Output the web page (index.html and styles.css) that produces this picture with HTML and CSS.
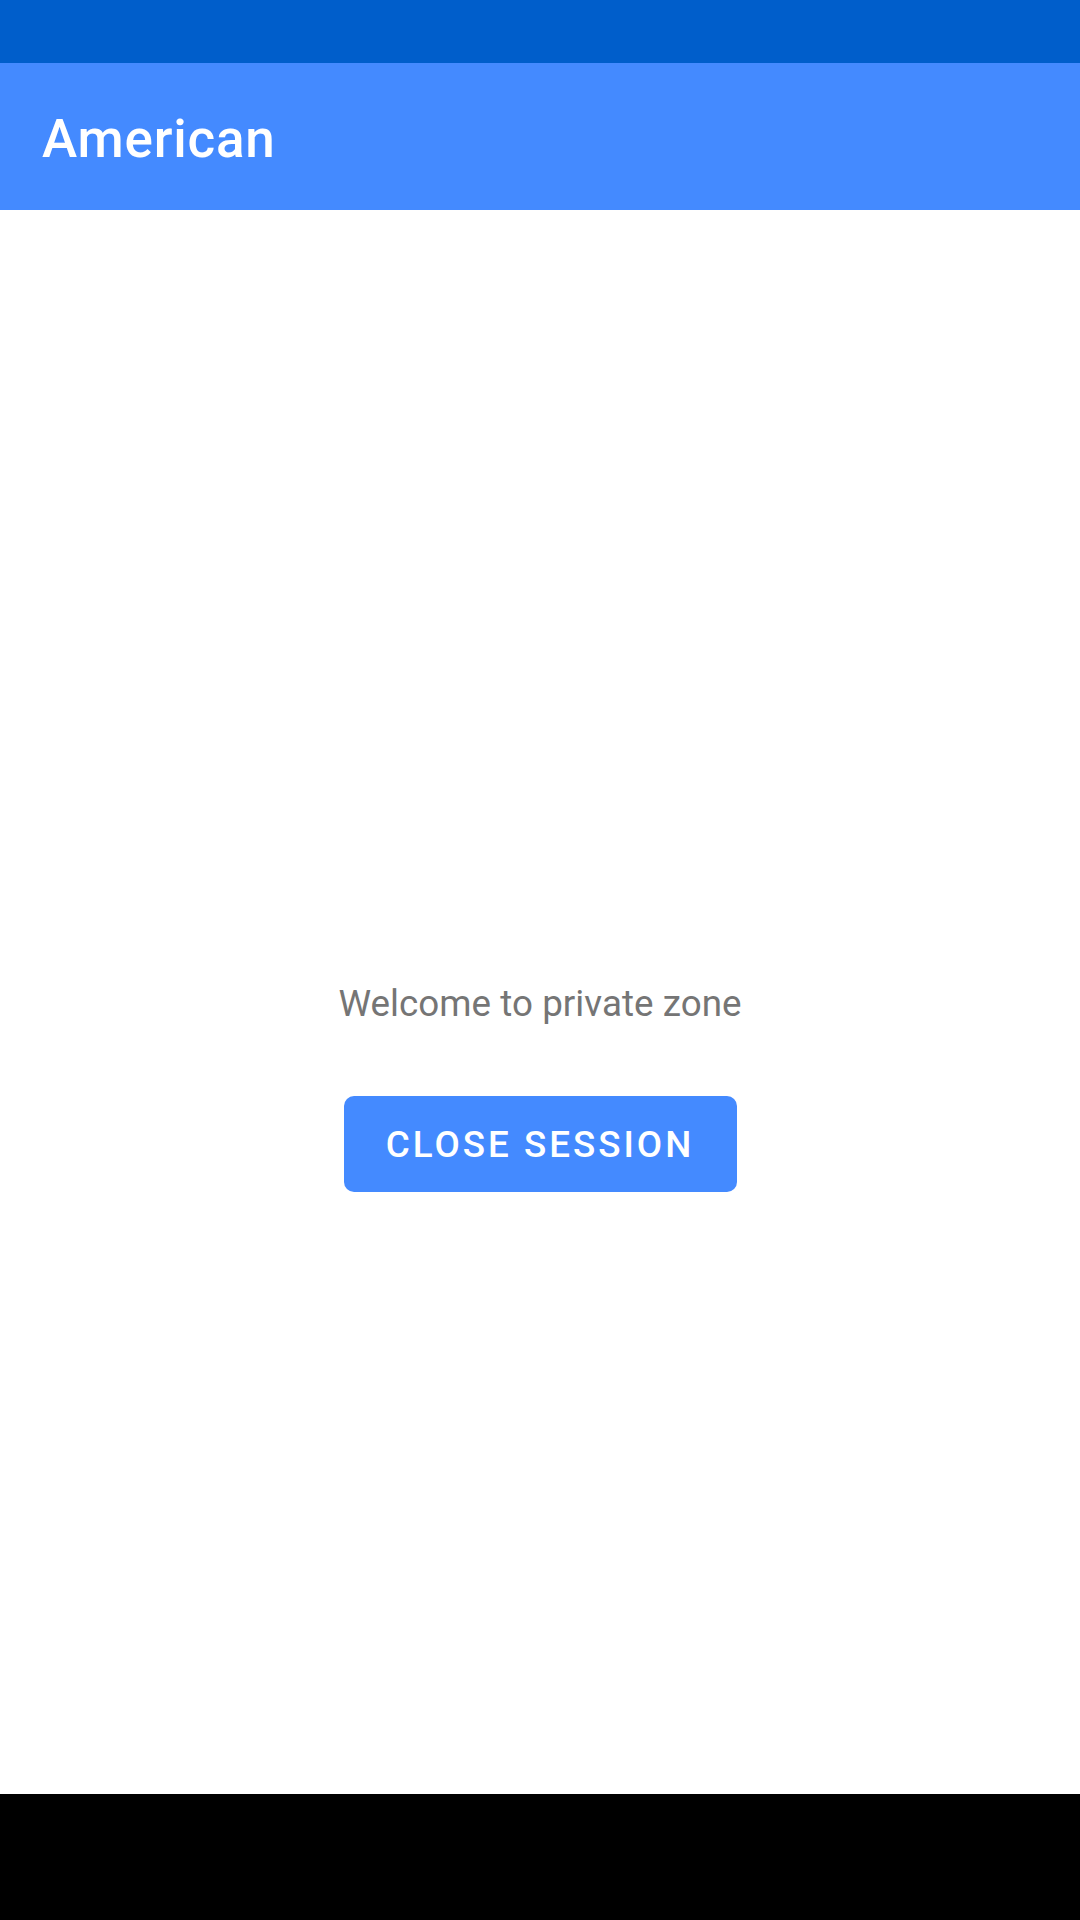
FILE: index.html
```html
<!DOCTYPE html>
<html>
<head>
<meta charset="utf-8">
<link rel="stylesheet" href="styles.css">
</head>
<body>
<div class="screen">
  <div class="status-bar"></div>
  <header class="app-bar"><h1 class="title">American</h1></header>
  <main class="content">
    <p class="welcome">Welcome to private zone</p>
    <button class="btn">CLOSE SESSION</button>
  </main>
  <div class="nav-bar"></div>
</div>
</body>
</html>
```
FILE: styles.css
```css
html, body {
  margin: 0;
  padding: 0;
}
body {
  font-family: Roboto, "Noto Sans", sans-serif;
  background: #ffffff;
}
.screen {
  width: 1080px;
  height: 1920px;
  display: flex;
  flex-direction: column;
}
.status-bar {
  height: 63px;
  background: #005ecb;
  flex: none;
}
.app-bar {
  height: 147px;
  background: #448aff;
  flex: none;
  display: flex;
  align-items: center;
  padding-left: 42px;
  box-sizing: border-box;
}
.title {
  margin: 0;
  padding-top: 4px;
  color: #ffffff;
  font-size: 53px;
  font-weight: 500;
  letter-spacing: 0.8px;
}
.content {
  flex: 1;
  display: flex;
  flex-direction: column;
  align-items: center;
  padding-top: 772px;
  box-sizing: border-box;
}
.welcome {
  margin: 0;
  font-size: 36.75px;
  color: #757575;
  line-height: 43px;
  letter-spacing: 0.05px;
}
.btn {
  margin-top: 71px;
  width: 393px;
  height: 96px;
  border: none;
  border-radius: 10px;
  background: #448aff;
  color: #ffffff;
  font-family: Roboto, sans-serif;
  font-size: 36.75px;
  font-weight: 500;
  letter-spacing: 3px;
  line-height: 43px;
  padding: 0;
  display: flex;
  align-items: center;
  justify-content: center;
}
.nav-bar {
  height: 126px;
  background: #000000;
  flex: none;
}
```
